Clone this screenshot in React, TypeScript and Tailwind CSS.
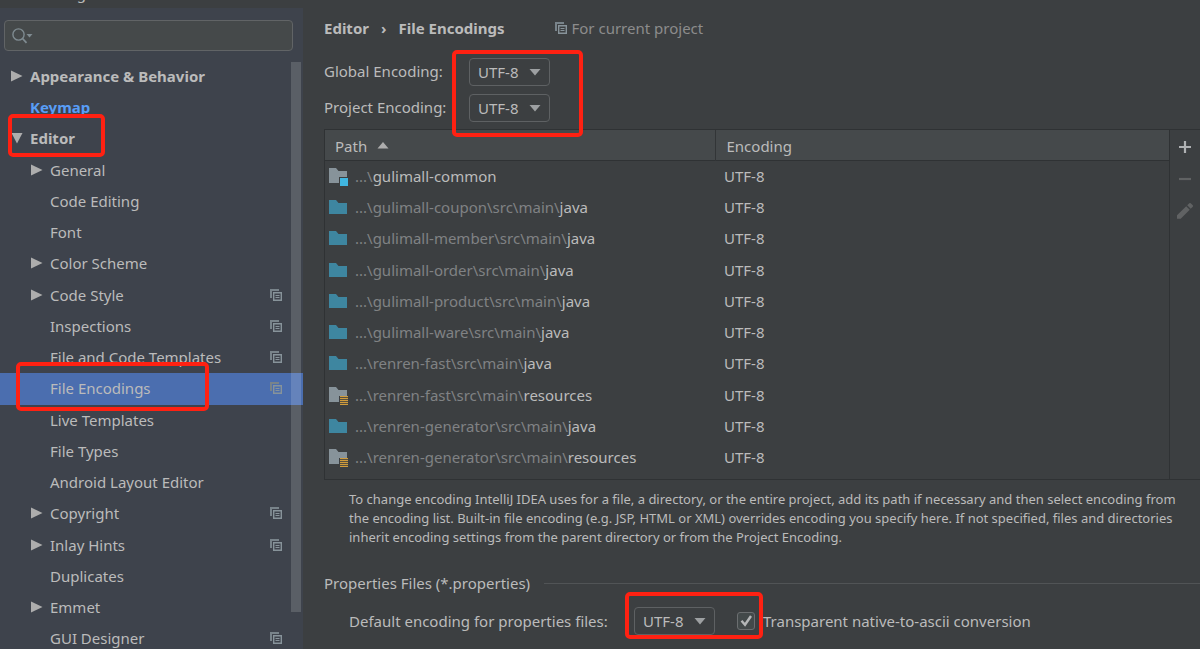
import type { ReactNode } from "react";

type TreeItem = {
  label: string;
  level: 0 | 1;
  arrow?: "right" | "down";
  project?: boolean;
  selected?: boolean;
  changed?: boolean;
  marked?: boolean;
};

const tree: TreeItem[] = [
  { label: "Appearance & Behavior", level: 0, arrow: "right" },
  { label: "Keymap", level: 0, changed: true },
  { label: "Editor", level: 0, arrow: "down", marked: true },
  { label: "General", level: 1, arrow: "right" },
  { label: "Code Editing", level: 1 },
  { label: "Font", level: 1 },
  { label: "Color Scheme", level: 1, arrow: "right" },
  { label: "Code Style", level: 1, arrow: "right", project: true },
  { label: "Inspections", level: 1, project: true },
  { label: "File and Code Templates", level: 1, project: true },
  { label: "File Encodings", level: 1, project: true, selected: true, marked: true },
  { label: "Live Templates", level: 1 },
  { label: "File Types", level: 1 },
  { label: "Android Layout Editor", level: 1 },
  { label: "Copyright", level: 1, arrow: "right", project: true },
  { label: "Inlay Hints", level: 1, arrow: "right", project: true },
  { label: "Duplicates", level: 1 },
  { label: "Emmet", level: 1, arrow: "right" },
  { label: "GUI Designer", level: 1, project: true },
];

type FolderKind = "module" | "source" | "resources";

const paths: { kind: FolderKind; prefix: string; name: string }[] = [
  { kind: "module", prefix: "...\\", name: "gulimall-common" },
  { kind: "source", prefix: "...\\gulimall-coupon\\src\\main\\", name: "java" },
  { kind: "source", prefix: "...\\gulimall-member\\src\\main\\", name: "java" },
  { kind: "source", prefix: "...\\gulimall-order\\src\\main\\", name: "java" },
  { kind: "source", prefix: "...\\gulimall-product\\src\\main\\", name: "java" },
  { kind: "source", prefix: "...\\gulimall-ware\\src\\main\\", name: "java" },
  { kind: "source", prefix: "...\\renren-fast\\src\\main\\", name: "java" },
  { kind: "resources", prefix: "...\\renren-fast\\src\\main\\", name: "resources" },
  { kind: "source", prefix: "...\\renren-generator\\src\\main\\", name: "java" },
  { kind: "resources", prefix: "...\\renren-generator\\src\\main\\", name: "resources" },
];

function ProjectIcon() {
  return (
    <svg width="12" height="12" viewBox="0 0 12 12" className="shrink-0" aria-hidden="true">
      <path d="M0 0H9V2H2V9H0Z" fill="#78838a" />
      <path d="M3 3H12V12H3ZM4.4 4.4V10.6H10.6V4.4Z" fill="#87939a" fillRule="evenodd" />
      <path d="M5.5 6.5H9.5M5.5 8.5H9.5" stroke="#87939a" strokeWidth="1" />
    </svg>
  );
}

function FolderIcon({ kind }: { kind: FolderKind }) {
  const fill = kind === "source" ? "#3e86a0" : "#87939a";
  return (
    <svg width="20" height="20" viewBox="0 0 20 20" className="shrink-0" aria-hidden="true">
      <path
        d={kind === "source" ? "M0 3H7L9.5 6H18V17H0Z" : "M0 2H7L9.5 5H18V11H10V17H0Z"}
        fill={fill}
      />
      {kind === "module" && <path d="M11 12H19V20H11Z" fill="#40b6e0" />}
      {kind === "resources" && (
        <g fill="#d09c3c">
          <path d="M11 11H19V12.2H11Z" />
          <path d="M11 13H19V14.2H11Z" />
          <path d="M11 15H19V16.2H11Z" />
          <path d="M11 17H19V18.2H11Z" />
          <path d="M11 19H19V20H11Z" />
        </g>
      )}
    </svg>
  );
}

function TreeArrow({ dir }: { dir: "right" | "down" }) {
  return (
    <svg width="12" height="12" viewBox="0 0 12 12" className="shrink-0" aria-hidden="true">
      <path d={dir === "right" ? "M0 0.5L11.5 6L0 11.5Z" : "M0.5 1H11.5L6 11.5Z"} fill="#adadad" />
    </svg>
  );
}

function Mark({ className }: { className: string }) {
  return (
    <span
      className={`pointer-events-none absolute z-10 rounded-[5px] border-4 border-[#ff2112] ${className}`}
      aria-hidden="true"
    />
  );
}

function EncodingSelect({ id }: { id: string }) {
  return (
    <span className="relative flex">
      <select
        id={id}
        defaultValue="UTF-8"
        className="h-7 w-[81px] appearance-none rounded border border-[#5e6163] bg-[#3c3f41] pl-2 text-[15px] leading-5 text-[#bbbbbb] outline-none"
      >
        <option>UTF-8</option>
        <option>GBK</option>
        <option>ISO-8859-1</option>
      </select>
      <svg
        width="12"
        height="7"
        viewBox="0 0 12 7"
        className="pointer-events-none absolute top-[11px] right-[9px]"
        aria-hidden="true"
      >
        <path d="M0.5 0H11.5L6 6.5Z" fill="#9da0a2" />
      </svg>
    </span>
  );
}

function ToolButton({ label, children }: { label: string; children: ReactNode }) {
  return (
    <button type="button" aria-label={label} className="flex h-8 w-full items-center justify-center">
      {children}
    </button>
  );
}

function Sidebar() {
  return (
    <aside className="relative flex w-[303px] shrink-0 flex-col bg-[#3e434c]">
      <label className="mt-3 mr-[10px] ml-1 flex h-[31px] shrink-0 items-center rounded border border-[#616466] bg-[#45494a] pl-[7px]">
        <svg width="21" height="16" viewBox="0 0 21 16" className="shrink-0" aria-hidden="true">
          <circle cx="6.5" cy="6.5" r="5.6" fill="none" stroke="#7f8b91" strokeWidth="1.4" />
          <path d="M10.5 10.5L14.5 14.8" stroke="#7f8b91" strokeWidth="1.8" />
          <path d="M14.5 6H20.5L17.5 9.5Z" fill="#7f8b91" />
        </svg>
        <input
          type="text"
          aria-label="Search settings"
          className="h-full min-w-0 flex-1 bg-transparent pl-1 text-[15px] text-[#bbbbbb] outline-none"
        />
      </label>
      <ul className="mt-[10px]">
        {tree.map((item) => (
          <li
            key={item.label}
            className={`relative h-[31px] nth-[4n+3]:h-8 ${item.selected ? "bg-[#4b6eaf]" : ""}`}
          >
            <button
              type="button"
              aria-current={item.selected ? "page" : undefined}
              className={`flex h-full w-full items-center pr-[21px] pb-0.5 text-left ${item.level === 0 ? "pl-[11px]" : "pl-[31px]"}`}
            >
              <span className="flex w-[19px] shrink-0">{item.arrow && <TreeArrow dir={item.arrow} />}</span>
              <span
                className={`flex-1 whitespace-nowrap ${item.level === 0 ? "font-bold" : ""} ${item.changed ? "text-[#589df6]" : ""}`}
              >
                {item.label}
              </span>
              {item.project && <ProjectIcon />}
            </button>
            {item.marked &&
              (item.level === 0 ? (
                <Mark className="-top-[9px] left-2 h-[43px] w-[97px]" />
              ) : (
                <Mark className="-top-[11px] left-4 h-[49px] w-[193px]" />
              ))}
          </li>
        ))}
      </ul>
      <span className="absolute top-[54px] right-[2px] h-[550px] w-[10px] bg-white/15" aria-hidden="true" />
    </aside>
  );
}

function PathTable() {
  return (
    <div className="mt-[7px] flex border-t border-b border-l border-[#2f3234]">
      <div className="min-w-0 flex-1 pb-[7px]">
        <table className="w-full table-fixed border-collapse text-left">
          <colgroup>
            <col className="w-[390px]" />
            <col />
          </colgroup>
          <thead>
            <tr className="h-[30px] border-b border-[#2f3234] bg-[#45494b]">
              <th scope="col" className="border-r border-[#323537] p-0 pt-0.5 pl-[10px] font-normal">
                <span className="flex items-center gap-[10px]">
                  Path
                  <svg width="12" height="7" viewBox="0 0 12 7" aria-hidden="true">
                    <path d="M0.5 6.5H11.5L6 0Z" fill="#adadad" />
                  </svg>
                </span>
              </th>
              <th scope="col" className="p-0 pt-0.5 pl-[11px] font-normal">
                Encoding
              </th>
            </tr>
          </thead>
          <tbody>
            {paths.map((row) => (
              <tr key={row.prefix + row.name} className="h-[31px] nth-[4n+3]:h-8">
                <td className="p-0 pl-1">
                  <span className="flex items-center gap-[6px] whitespace-nowrap">
                    <FolderIcon kind={row.kind} />
                    <span className="text-[#808284]">
                      {row.prefix}
                      <span className="text-[#bbbbbb]">{row.name}</span>
                    </span>
                  </span>
                </td>
                <td className="p-0 pl-[9px]">UTF-8</td>
              </tr>
            ))}
          </tbody>
        </table>
      </div>
      <div className="flex w-[31px] shrink-0 flex-col border-l border-[#2f3234] pt-px">
        <ToolButton label="Add">
          <svg width="14" height="14" viewBox="0 0 14 14" aria-hidden="true">
            <path d="M7 1V13M1 7H13" stroke="#afb1b3" strokeWidth="2.2" />
          </svg>
        </ToolButton>
        <ToolButton label="Remove">
          <svg width="14" height="14" viewBox="0 0 14 14" aria-hidden="true">
            <path d="M1 7H13" stroke="#606263" strokeWidth="2.2" />
          </svg>
        </ToolButton>
        <ToolButton label="Edit">
          <svg width="18" height="18" viewBox="0 0 18 18" aria-hidden="true">
            <path
              d="M1 13.2L10.2 4.2L13.7 7.7L4.7 16.8H1ZM11.2 3.2L13.3 1.2Q14 .7 14.7 1.2L16.8 3.3Q17.3 4 16.8 4.7L14.7 6.7Z"
              fill="#606263"
            />
          </svg>
        </ToolButton>
      </div>
    </div>
  );
}

export default function App() {
  return (
    <div className="flex h-screen flex-col overflow-hidden bg-[#3c3f41] font-['Noto_Sans','Noto_Sans_CJK_SC',sans-serif] text-[15px] leading-5 text-[#bbbbbb]">
      <header className="flex h-2 shrink-0 items-end overflow-hidden pb-[5px] pl-9">
        <span>Settings</span>
      </header>
      <div className="flex min-h-0 flex-1">
        <Sidebar />
        <main className="min-w-0 flex-1 pl-[21px]">
          <div className="flex h-10 items-center">
            <h1 className="flex items-center gap-3 font-bold">
              <span>Editor</span>
              <span>›</span>
              <span>File Encodings</span>
            </h1>
            <p className="ml-[50px] flex items-center gap-[5px] text-[#8c8c8c]">
              <ProjectIcon />
              For current project
            </p>
          </div>
          <div className="relative mt-[10px] grid grid-cols-[145px_auto] items-center justify-start gap-y-2">
            <label htmlFor="global-encoding" className="pb-0.5">
              Global Encoding:
            </label>
            <EncodingSelect id="global-encoding" />
            <label htmlFor="project-encoding" className="pb-0.5">
              Project Encoding:
            </label>
            <EncodingSelect id="project-encoding" />
            <Mark className="-top-2 left-32 h-[87px] w-[131px]" />
          </div>
          <PathTable />
          <p className="mt-[10px] pl-[25px] text-[13px] leading-[19px] whitespace-nowrap">
            To change encoding IntelliJ IDEA uses for a file, a directory, or the entire project, add its path if
            necessary and then select encoding from
            <br />
            the encoding list. Built-in file encoding (e.g. JSP, HTML or XML) overrides encoding you specify here. If
            not specified, files and directories
            <br />
            inherit encoding settings from the parent directory or from the Project Encoding.
          </p>
          <section className="mt-[26px]">
            <h2 className="flex items-center gap-[14px]">
              Properties Files (*.properties)
              <span className="h-px flex-1 bg-[#515456]" />
            </h2>
            <div className="mt-[14px] flex items-center pl-[25px]">
              <label htmlFor="properties-encoding" className="w-[285px] shrink-0 whitespace-nowrap">
                Default encoding for properties files:
              </label>
              <div className="relative flex items-center">
                <EncodingSelect id="properties-encoding" />
                <span className="relative ml-[22px] flex">
                  <input
                    id="native-to-ascii"
                    type="checkbox"
                    defaultChecked
                    className="peer size-[18px] appearance-none rounded-[3px] border border-[#6b6e70] bg-[#43494a]"
                  />
                  <svg
                    width="18"
                    height="18"
                    viewBox="0 0 18 18"
                    className="pointer-events-none invisible absolute inset-0 peer-checked:visible"
                    aria-hidden="true"
                  >
                    <path d="M4.5 8.8L8 12.8L14 4" fill="none" stroke="#b5b7b8" strokeWidth="2.4" />
                  </svg>
                </span>
                <Mark className="-top-[15px] -left-[9px] h-[47px] w-[138px]" />
              </div>
              <label htmlFor="native-to-ascii" className="ml-2 whitespace-nowrap">
                Transparent native-to-ascii conversion
              </label>
            </div>
          </section>
        </main>
      </div>
    </div>
  );
}
